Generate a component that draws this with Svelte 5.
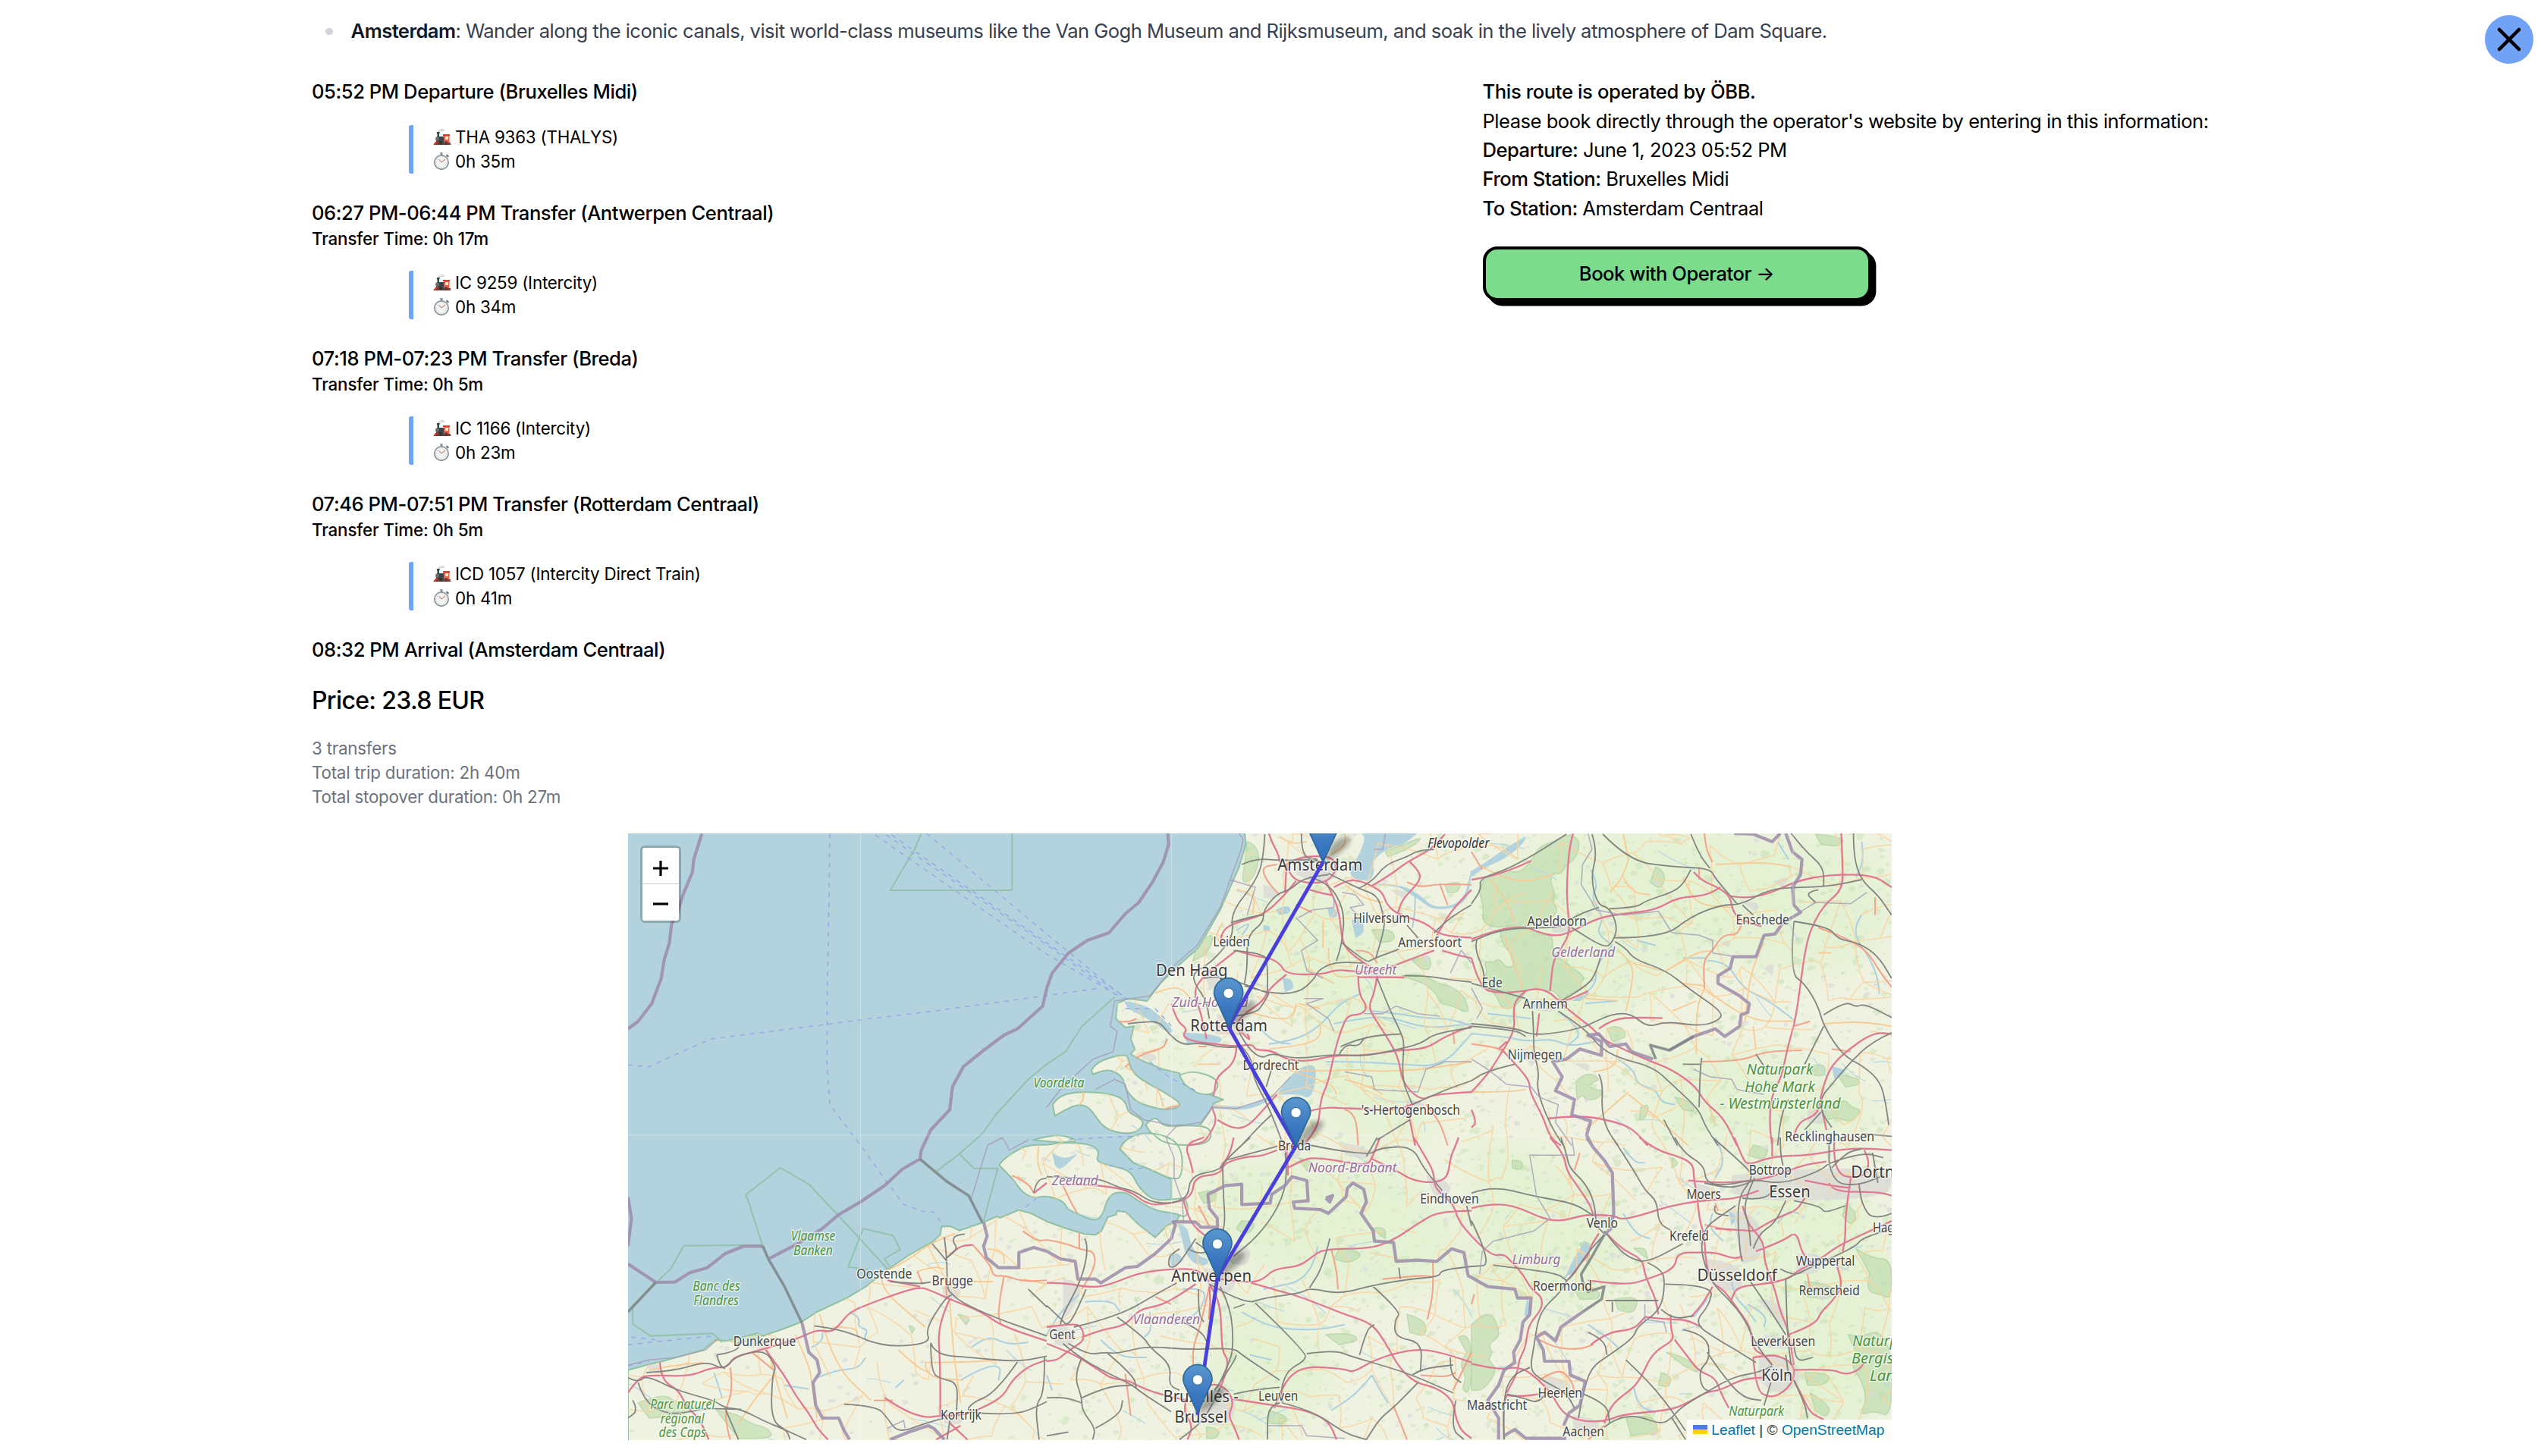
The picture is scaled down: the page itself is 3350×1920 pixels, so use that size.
<script>
  const legs = [
    { title: '05:52 PM Departure (Bruxelles Midi)', train: 'THA 9363 (THALYS)', time: '0h 35m' },
    { title: '06:27 PM-06:44 PM Transfer (Antwerpen Centraal)', wait: '0h 17m', train: 'IC 9259 (Intercity)', time: '0h 34m' },
    { title: '07:18 PM-07:23 PM Transfer (Breda)', wait: '0h 5m', train: 'IC 1166 (Intercity)', time: '0h 23m' },
    { title: '07:46 PM-07:51 PM Transfer (Rotterdam Centraal)', wait: '0h 5m', train: 'ICD 1057 (Intercity Direct Train)', time: '0h 41m' }
  ];

  // Map geometry is stored per tile: column, row, then "x,y" pairs in tile units.
  const TW = 1568, TH = 1230;
  const pts = (c, r, s) =>
    s.trim().split(/\s+/).map((p) => {
      const [x, y] = p.split(',').map(Number);
      return [(x + c * TW) / 2.8 - 8, (y + r * TH) / 3 - 9];
    });
  const f = (n) => n.toFixed(1);
  const straight = (p) => 'M' + p.map(([x, y]) => f(x) + ' ' + f(y)).join('L');
  const smooth = (p) => {
    if (p.length < 3) return straight(p);
    let d = 'M' + f(p[0][0]) + ' ' + f(p[0][1]);
    for (let i = 1; i < p.length - 1; i++) {
      const [x, y] = p[i], [nx, ny] = p[i + 1];
      d += `Q${f(x)} ${f(y)} ${f((x + nx) / 2)} ${f((y + ny) / 2)}`;
    }
    const l = p[p.length - 1];
    return d + `L${f(l[0])} ${f(l[1])}`;
  };
  const build = (tiles, fn = smooth, close = '') =>
    tiles.map(([c, r, ...lines]) => lines.map((s) => fn(pts(c, r, s)) + close).join('')).join('');

  const mainland = build([[0, 0,
    '22,2150 90,2130 150,2115 300,2070 345,2030 380,2035 430,2025 500,2005 520,2015 600,1985 665,1958 720,1920 830,1865 900,1820 970,1760 1060,1695 1150,1640 1175,1615 1180,1582 1215,1582 1245,1598 1335,1565 1385,1542 1395,1548 1465,1517 1510,1530 1568,1562 1640,1590 1708,1612 1748,1615 1770,1600 1793,1545 1823,1535 1828,1520 1860,1525 1908,1575 1968,1625 2010,1580 2048,1560 2075,1500 2068,1470 2028,1480 2028,1395 1948,1355 1888,1330 1838,1275 1850,1250 1890,1225 1960,1245 2010,1235 2000,1190 2060,1180 2128,1190 2168,1130 2185,1095 2220,1080 2168,1060 2098,1020 2058,975 1998,960 1918,925 1878,900 1893,880 1878,840 1890,790 1858,795 1823,760 1828,700 1868,680 1938,690 1988,620 2048,555 2128,480 2208,330 2278,160 2303,70 2298,20 4700,20 4700,2440 22,2440']], straight, 'Z');

  const islands = build([
    [1, 0,
      '165,965 180,930 290,898 302,920 310,960 345,1000 450,1060 505,1105 440,1122 380,1108 330,1088 290,1040 282,990 230,958 170,980',
      '22,1100 40,1070 100,1050 200,1052 260,1065 292,1090 300,1130 340,1150 360,1172 335,1210 270,1215 210,1190 180,1145 150,1105 110,1100 60,1125 30,1145',
      '365,1180 400,1140 430,1190 520,1180 610,1190 600,1260 440,1260 380,1205',
      '490,985 530,960 640,1000 620,1060 560,1060 510,1020'],
    [1, 1,
      '-175,110 -170,95 -105,45 -58,28 0,30 40,22 100,20 170,30 195,60 180,95 250,115 310,132 340,200 395,250 460,245 520,240 520,320 475,300 400,290 330,245 290,215 230,222 200,328 150,322 115,300 80,288 60,250 0,230 -48,240 -88,220 -125,165',
      '-50,10 0,-5 60,-10 120,15 60,20 0,15',
      '270,45 285,10 350,-20 440,-10 500,40 500,160 460,165 380,125 320,100']
  ], smooth, 'Z');

  const lakes = build([
    [1, 0,
      '1130,20 1180,20 1160,100 1105,200 1190,218 1212,180 1200,140 1250,90 1320,70 1375,20',
      '1200,225 1300,225 1380,270 1430,325 1540,300 1568,160 1568,190 1550,310 1430,335 1370,285 1300,240',
      '1125,370 1160,350 1175,420 1140,440', '1035,320 1070,320 1075,360 1045,360', '845,330 890,305 905,340 860,350',
      '870,600 900,595 915,640 880,655', '800,390 825,390 825,415 800,415', '500,815 640,820 650,860 520,860',
      '850,1060 900,980 960,940 1000,950 980,1080 930,1060', '600,1095 700,1115 780,1090 850,1050 830,1080 740,1125 610,1115',
      '285,690 360,700 430,760 470,810 450,820 390,770 300,720'],
    [2, 0, '0,175 40,150 100,105 180,50 205,35 190,70 120,130 40,165 0,200', '370,690 420,650 440,660 400,690', '1330,950 1400,960 1340,1000'],
    [1, 1, '485,340 520,350 530,420 560,470 600,480 590,510 540,500 510,450', '450,460 480,450 510,490 460,510', '20,60 60,90 120,60 100,80 50,130 30,110'],
    [2, 1, '420,410 350,520 360,560 440,440', '950,290 985,310 960,350', '205,640 225,660 210,720 195,700']
  ], smooth, 'Z');

  // Broad meadow tint under the woods.
  const meadow = build([
    [1, 0, '760,300 900,200 1100,300 1300,480 1500,700 1568,900 1400,1100 1200,1050 1000,800 850,600 700,500', '900,900 1100,800 1300,950 1500,1262 1100,1262 1020,1100', '350,850 600,900 560,960 420,930'],
    [2, 0, '0,300 200,27 900,27 1551,60 1551,500 1200,600 900,480 600,700 300,900 0,800', '600,900 1000,860 1400,1000 1551,1262 700,1262'],
    [1, 1, '550,150 900,60 1400,120 1568,500 1300,640 900,560 700,480 600,300', '640,600 900,680 1100,900 900,1195 560,1195'],
    [2, 1, '0,0 300,60 560,300 600,560 300,700 0,740', '980,100 1551,60 1551,1195 1150,1195 1000,700', '380,1060 700,1050 640,1195 380,1195']
  ], smooth, 'Z');

  const forest = build([
    [2, 0,
      '45,205 100,190 130,170 160,185 200,165 230,120 250,80 300,60 340,40 370,30 400,60 390,110 370,140 350,150 330,190 300,180 290,220 310,260 300,300 320,330 290,370 260,360 230,380 200,400 150,390 100,400 60,390 40,370 45,320 30,260',
      '105,410 160,400 210,405 260,430 300,430 300,500 350,540 390,570 420,600 400,620 410,640 360,660 330,690 310,650 280,650 240,640 200,650 180,690 150,720 110,720 90,660 50,640 40,600 60,580 45,530 80,540 100,520 130,560 160,550 150,510 120,470 110,440',
      '385,1010 400,990 440,975 475,1000 450,1010 430,1030 460,1040 490,1050 460,1080 420,1080 410,1060 390,1080', '625,1110 660,1090 640,1160 620,1160',
      '1290,1110 1340,1100 1380,1080 1400,1110 1440,1120 1420,1150 1400,1170 1350,1150 1310,1160', '1350,980 1420,990 1440,1020 1380,1030', '500,800 540,780 580,830 520,850',
      '750,1070 800,1080 830,1130 780,1120', '680,160 720,180 700,250 660,220', '1270,30 1380,40 1360,80 1290,70', '1250,950 1300,930 1310,990 1240,980'],
    [1, 0,
      '1310,590 1350,580 1400,590 1440,620 1490,630 1540,670 1550,700 1560,740 1500,710 1450,700 1440,660 1390,620', '1350,530 1380,520 1410,510 1420,540 1410,570 1380,560', '740,60 790,80 770,200 720,230 730,150',
      '550,480 620,400 600,500 540,530', '1470,230 1530,210 1520,260 1480,260', '1200,410 1270,400 1290,450 1230,460', '1250,100 1340,60 1390,40 1350,80 1260,120'],
    [0, 1,
      '60,1050 150,1010 200,1050 280,1060 220,1100 100,1110', '350,1080 420,1090 470,1130 540,1150 560,1190 430,1190', '380,800 430,790 500,780 520,790 430,815',
      '1240,700 1290,710 1270,740', '1060,745 1085,750 1070,775'],
    [1, 1,
      '560,220 620,200 630,250 580,260', '720,330 780,330 740,390 700,360', '1080,440 1180,450 1120,500 1060,480', '1330,700 1400,720 1400,790 1340,770',
      '1520,790 1568,760 1568,1010 1530,1000 1550,950 1525,900 1550,850', '820,1080 890,1100 880,1135 820,1130', '590,1145 640,1150 630,1190 590,1190', '640,440 730,460 690,500',
      '1030,780 1110,770 1160,800 1080,820', '1200,360 1250,350 1250,400', '930,80 1000,100 960,130'],
    [2, 1,
      '0,740 40,700 80,700 100,760 100,790 60,820 80,850 60,880 90,910 80,950 40,1000 0,1000', '700,930 740,940 730,990 690,980', '1230,930 1330,930 1310,980 1240,980', '1250,1010 1330,1060 1310,1110 1270,1080',
      '1420,440 1480,480 1551,480 1551,640 1510,620 1460,610 1470,540', '1390,780 1440,790 1500,760 1551,840 1551,1110 1490,1080 1430,1100 1460,1040 1440,960 1400,900 1420,850', '400,420 440,400 430,500', '600,440 640,430 650,480',
      '1040,30 1100,40 1080,90 1020,70', '570,1110 620,1100 680,1110 690,1180 640,1170 590,1180', '740,80 770,100 740,120', '1230,570 1340,580 1330,640 1240,630', '380,600 460,590 480,640 400,640',
      '1380,260 1430,300 1400,350 1370,310', '150,90 190,90 185,130 150,120', '720,850 800,870 850,940 780,900', '530,640 620,620 600,700 540,680']
  ], smooth, 'Z');

  const urban = build([
    [1, 0, '930,120 1060,140 1080,200 1000,230 920,190', '580,580 700,590 690,640 600,640', '630,740 760,770 740,830 620,820', '1180,560 1250,560 1240,610 1180,600', '800,230 850,240 850,290 800,280', '350,890 410,900 400,930 350,920', '1330,1080 1400,1090 1390,1130 1330,1120', '1270,250 1330,250 1320,290'],
    [2, 0, '290,380 380,380 370,420 300,420', '220,680 320,690 310,740 220,720', '180,880 260,900 220,950', '1240,1120 1300,1110 1300,1180 1240,1170', '920,460 960,440 950,480', '1110,220 1180,190 1150,240', '1080,560 1120,530 1110,590', '990,290 1070,300 1050,340', '380,940 440,930 430,970'],
    [0, 1, '100,900 140,890 140,930 100,930', '470,790 560,800 540,840 460,830', '1180,590 1250,580 1250,640 1190,640', '1190,1080 1270,1090 1250,1140 1190,1130'],
    [1, 1, '580,520 700,520 690,620 600,610', '690,420 760,430 740,510 690,500', '560,990 690,990 700,1110 620,1150 540,1100', '20,740 90,740 100,830 30,820', '60,560 140,570 100,680 60,720', '1400,150 1490,170 1490,230 1430,230', '1090,20 1200,40 1190,90 1100,70', '860,20 940,40 930,90 880,80'],
    [2, 1, '860,480 990,490 1010,600 920,610 860,560', '960,150 1120,130 1330,120 1551,130 1551,230 1300,250 1060,250 960,220', '820,180 920,200 900,260 830,240', '1060,860 1200,870 1220,980 1120,1020 1060,960', '440,290 530,300 510,370 450,350', '1200,460 1300,450 1290,540 1200,540', '1230,590 1300,590 1300,650', '270,940 370,960 360,1010 270,990', '370,1100 480,1110 460,1170 380,1160', '820,370 870,380 850,440', '1080,780 1200,790 1200,840 1090,830', '960,290 1060,290 1080,480 1000,500', '1050,640 1150,640 1160,760']
  ], smooth, 'Z');

  const motorways = build([
    [1, 0,
      '820,27 830,60 855,110 860,140', '880,260 885,150', '1030,215 1055,270 1080,340 1090,450 1110,490 1170,540 1220,570',
      '885,150 920,125 1000,115 1060,125 1070,170 1040,215 990,225 920,215 895,180 885,150',
      '1060,240 1110,210 1160,215 1200,235 1240,260 1255,310 1300,350 1400,380 1450,430 1568,440', '1200,235 1270,190 1330,140 1420,90 1470,30',
      '920,215 880,270 800,350 700,380 660,400 640,440 650,470', '700,490 640,540 580,590 540,650 570,740 590,840',
      '700,490 760,510 820,520 860,540 885,585 1020,585 1070,565 1150,575 1220,575 1330,530 1430,490', '885,585 820,640 800,690 730,740 700,780',
      '1150,590 1150,660 1185,715 1160,745 1110,745 1085,810 1060,900 1040,1010 1010,1080 1005,1180 950,1260',
      '1220,590 1210,660 1185,715 1230,790 1300,910 1310,1010 1380,1085 1430,1060 1568,1050',
      '460,700 480,770 520,800 500,830 540,850 620,860 700,870 760,860 770,885 830,885 880,920 960,930 1060,905 1180,905 1290,885 1400,880 1470,830 1568,790',
      '700,870 700,930 625,990 620,1050 605,1105 630,1160 600,1220 580,1250 520,1262', '630,1160 680,1195 740,1190 800,1120 850,1060', '960,1130 1010,1110 1130,1115 1290,1125 1380,1085',
      '740,820 760,860 700,790', '970,250 1010,262 1055,272', '1340,140 1380,180 1375,220 1310,290 1295,350', '1568,250 1500,320 1440,430', '1460,490 1520,510 1568,520', '1150,595 1220,595 1320,597', '1330,1100 1340,1160 1360,1262'],
    [2, 0,
      '375,27 360,80 350,260 360,380 360,430 320,500 300,540 290,650', '0,445 100,405 200,395 250,420 320,435 380,410 470,360 560,345 680,330 760,280 860,275 920,240',
      '820,180 850,215 910,240 955,275 965,340 1000,370', '955,275 1010,285 1100,265 1200,215 1320,190 1480,190 1551,240',
      '1365,27 1370,150 1370,250 1300,310 1250,410 1230,500 1215,620 1195,770 1165,880 1145,990 1105,1070 1100,1180 1110,1262',
      '0,520 30,640 100,660 200,650 240,640 290,655 330,700 430,650', '330,700 400,760 450,800 480,840 560,880 640,920 740,960 830,1030 860,1090 930,1150 980,1262',
      '470,800 520,760 620,755 705,758', '0,1050 60,980 90,930 160,810 155,740 160,690 200,650', '250,740 240,830', '110,880 180,960 215,1010 215,1050 265,1150 290,1230 330,1262',
      '280,1155 400,1140 540,1170 600,1200 650,1262', '1190,1230 1200,1170 1280,1140 1290,1060 1320,960 1370,900 1480,815 1551,820', '0,210 60,200 160,165 220,135', '1000,370 1070,395', '1290,1100 1310,1200', '0,1120 20,1170 0,1190', '100,880 130,850'],
    [0, 1,
      '22,1010 60,950 110,940 250,945 330,910 390,910 410,870 480,850 560,825 650,795 720,760 770,770 800,745 840,690 920,655 1010,620 1100,590 1150,610 1210,640 1330,690 1400,745 1568,805',
      '140,890 145,960 210,1000 235,1060 290,1120 320,1195', '530,840 600,940 640,1020 690,1090 720,1150 760,1195', '1195,480 1240,430 1295,425', '1210,640 1165,740 1175,900 1175,1100',
      '970,1030 1030,1075 1120,1110 1170,1100 1260,1100 1350,1060 1410,1020 1440,960 1500,905 1568,880', '1160,1195 1250,1140', '1210,1130 1275,1195', '980,565 1100,590', '1520,220 1568,180'],
    [1, 1,
      '0,575 60,575 170,595 240,580 340,535 460,520 560,520 600,570', '60,185 150,185 300,205 370,265 440,265 535,240 545,155 640,145 655,100 740,75 790,75 850,50',
      '540,140 530,90 515,50 525,20 580,0', '690,0 680,60 640,120', '505,250 520,310 550,360 600,400', '890,120 950,85 1000,80 1090,95 1180,110 1200,85 1230,0',
      '1200,85 1290,130 1350,170 1430,180 1480,160 1490,80 1510,30 1520,0', '1355,0 1400,80 1430,140 1430,200 1500,260 1520,330 1568,390',
      '1568,290 1450,290 1370,340 1290,400 1200,440 1020,440 970,480 930,510 840,520 800,560 755,575 640,560',
      '755,575 850,605 920,625 1020,665 1100,700 1200,735 1250,810 1300,910 1360,970 1440,990 1500,1040 1510,1110 1530,1160 1568,1190',
      '1568,890 1490,860 1380,835 1280,855 1200,885 1130,930 1100,915 960,905 900,940 865,1000 840,1070', '690,1035 840,1060 960,1080 1040,1120 1070,1195',
      '0,815 60,840 120,870 200,925 240,955 300,960 350,990 430,1020 520,1040', '130,790 200,760 290,745 340,680 420,665 480,630 550,580', '600,590 605,640 600,720',
      '600,580 640,640 645,790 650,850 670,880 660,940 640,990', '520,1020 560,1000 620,970 670,1000 690,1050 670,1100 690,1140 710,1195', '520,1020 500,1080 540,1140 520,1195', '0,750 100,735 130,750 140,800 100,830 60,860 40,880 0,885', '890,150 890,80 880,40'],
    [2, 1,
      '0,280 50,265 150,265 270,325 340,330 400,310 450,305 530,310 550,325 620,310 690,285 760,265 850,250 920,245 980,240 1060,210',
      '290,0 340,60 350,130 390,190 440,270 450,310', '620,0 680,50 780,80 820,110 820,160 835,240 840,320 860,390 865,500 890,580 930,600 990,690 1030,750 1040,840 1080,860 1110,900',
      '970,0 1000,80 1020,110 1110,75 1250,70 1400,40 1551,50', '1110,75 1110,0', '800,170 900,180 1000,175 1100,160 1220,110 1310,95',
      '0,390 70,470 120,460 150,495 190,540 220,600 260,630 260,680 210,740 200,830 175,880 170,930 130,1010', '360,560 400,500 430,470 440,430 470,380',
      '500,380 550,440 630,480 640,540 655,580 680,640 690,700', '430,565 500,575 590,580 650,560 750,520 760,455 850,455 900,455 970,480 1000,470',
      '640,710 720,720 790,720 850,750', '890,590 860,650 810,710', '735,700 735,760 750,800 670,850 630,940 600,990 520,1050 490,1130', '750,800 800,870 840,925 900,950 920,1010 950,1070',
      '440,820 500,770 600,760 640,710', '0,895 100,920 180,905 250,960 300,1020 330,1080 370,1110 430,1125 500,1120 560,1095 720,1080 780,1060 870,1005 920,1000 1000,955 1080,950',
      '130,1020 180,1025 250,1015', '120,1195 115,1060 130,1020', '1040,870 1050,1000 1100,1030 1150,1010 1190,960 1190,900 1150,870 1110,860 1040,870', '1190,920 1330,915 1380,940 1430,920 1450,890',
      '1190,960 1220,1020 1250,1090 1300,1115', '1000,270 1020,340 1045,370 1080,420 1080,490 1120,600 1140,690 1170,760 1190,900',
      '1551,330 1450,380 1350,430 1290,480 1200,530 1170,560 1080,580 980,590 960,640', '1170,780 1270,740 1290,690 1330,650 1370,590 1350,510',
      '1340,0 1330,150 1450,160 1470,100 1450,50', '1320,180 1330,215 1500,215 1551,230', '1400,160 1380,300 1380,400 1370,450', '1045,370 1120,320 1200,290 1230,240', '1050,450 1150,410 1200,370 1220,460 1260,500', '900,360 1045,370', '1230,170 1320,190 1400,200']
  ]);

  const rails = build([
    [1, 0,
      '805,30 800,130 770,220 680,340 690,430 640,500 590,550 540,580 545,620 590,690 600,760', '720,150 770,125 860,135 970,130 1020,140', '970,200 1040,220 1100,330 1090,460 1070,530', '940,27 940,120 1000,130',
      '1090,460 1180,540 1200,525 1300,485', '1040,190 950,200 900,250 850,265 800,330 800,380 740,430 740,560 730,620', '680,380 760,355 800,350', '690,490 800,500 815,540 815,660',
      '730,630 815,660 930,660 990,600 1000,570 1060,535 1170,540', '1040,185 1150,245 1220,270 1240,340 1250,390 1215,520', '1150,245 1200,220 1250,150 1330,120 1370,95 1430,90', '1568,310 1500,350 1430,420', '1330,390 1370,440',
      '1220,600 1260,710 1310,820 1320,860 1310,1000 1350,1100', '300,780 370,770 420,775 450,820 500,865 560,855 660,875 720,870', '700,790 730,860 790,920 830,895 920,920 1060,900 1170,910 1280,885 1380,860 1430,820 1568,795',
      '720,870 760,920 760,990 820,1110 870,1250', '1350,1100 1450,1050 1568,1005', '1340,1160 1220,1240', '1320,590 1400,590 1480,605 1568,615', '690,750 770,740 800,700 820,660', '1085,870 1170,830 1310,820', '830,960 810,1030', '1080,900 1100,860 1150,870 1170,840', '720,1260 780,1190 830,1140', '580,600 640,590 720,620 820,660'],
    [2, 0,
      '350,30 250,100 130,170 30,205 35,250 0,305', '445,30 465,100 440,200 465,310 510,320 540,400 520,460 490,480 370,400', '470,320 380,350 340,400 200,400 100,410 0,455', '485,30 580,135 740,160 880,165 900,205 980,305', '810,30 840,110 880,165',
      '510,325 610,320 640,295 740,260 780,230 810,170', '525,440 710,440 810,355 920,310 1000,308 1100,245 1240,240 1330,235 1440,210', '530,455 570,480 600,525 720,570 800,640 930,735 910,770 840,790 720,770 650,795 590,740 520,740 420,790',
      '480,500 460,590 410,640 330,690', '320,730 420,800 470,870 540,915 670,950 740,1020 840,1120 860,1180 910,1262', '225,730 230,820 230,900 250,970 240,1040 290,1180 340,1262', '0,780 160,795 220,825 330,815 420,790', '0,790 160,803 200,830', '0,620 100,650 200,680',
      '160,940 60,965 0,1005', '470,980 485,1010 480,1120 500,1200 540,1260', '1000,310 1040,350', '1190,375 1320,395 1350,445 1430,460 1500,510 1551,600', '1190,375 1175,580 1230,620 1280,710 1300,790 1370,905 1450,950 1510,1010 1530,1100 1540,1180',
      '1300,790 1230,940', '1300,745 1380,690 1420,715 1450,700 1551,755', '1410,27 1410,120 1440,215 1500,270 1551,350', '1180,27 1230,95 1300,160 1300,235', '1551,815 1480,850 1400,930 1330,1020 1290,1070 1290,1130 1330,1190', '1050,900 1100,980', '850,915 845,940 840,1110', '780,940 845,940',
      '1230,1200 1290,1130', '1440,1215 1551,1225', '1130,1262 1140,1150 1170,1080', '710,1160 760,1262', '20,450 10,480 50,580 40,640', '1280,250 1230,260 1270,300'],
    [0, 1,
      '22,950 60,970 90,940 200,1000 340,1040 380,1070 440,1075 520,1120 600,1155 680,1195', '60,970 80,1040 160,1095 260,1085 300,1072 440,1075', '380,1070 430,1195', '90,930 190,925 310,885 370,915 390,900 430,860 530,840 570,910 555,940 550,1120 610,1160 620,1195', '350,860 430,845 430,810', '350,860 360,900 380,915',
      '710,745 780,755 860,780 920,810 1010,828 1140,812 1120,760 1190,640 1220,620', '1190,395 1200,480 1200,600 1220,620 1250,650 1370,710 1568,785', '1145,420 1200,490', '1265,382 1230,385 1220,410 1240,440 1200,475', '990,570 1090,580 1140,572',
      '1140,812 1140,930 1180,955 1240,970 1235,1080', '1140,812 1155,860 1290,870 1460,888 1568,865', '1460,888 1380,1010 1290,1050 1270,1090 1460,1095 1530,1065 1568,1045', '820,1055 940,1062 980,1110 1020,1170 1120,1130 1190,1110', '1500,600 1568,670', '1560,870 1560,1010 1525,1060 1540,1195', '1210,1120 1200,1195', '40,1040 60,1080 22,1110', '1520,220 1530,170 1568,160'],
    [1, 1,
      '0,155 90,160 190,160 270,200 320,210 400,265 520,250 530,150 640,130 660,90 750,0', '660,90 850,35', '970,30 1180,75 1230,40 1350,35 1390,120 1460,210', '1180,75 1220,0', '650,100 650,200 660,340 640,400',
      '880,60 890,150 860,270 780,390 690,470', '1045,400 1020,510 970,595', '600,580 730,660 800,635 940,615 970,595 1080,620 1200,585 1340,560 1450,550 1455,525 1568,510', '1200,585 1310,690 1285,720 1285,790 1385,810 1380,920',
      '770,655 960,850 950,885 890,920 865,990 870,1050', '640,590 680,670 690,830 670,900 630,990', '690,675 730,660', '560,600 560,700 580,730', '100,750 260,710 420,610 480,575', '80,815 150,860 210,850 260,855 370,825 530,840 690,832 720,860 860,960',
      '60,815 120,870 220,930 310,975 350,1010 460,1085', '220,850 320,940 330,990', '130,870 100,940 130,1030 130,1080 180,1150 170,1195', '130,1030 220,985 320,980', '260,710 360,790 380,830 460,900 450,980 490,1000', '0,1030 60,1025 130,1050',
      '960,855 1060,840 1120,865 1250,905 1350,940 1500,1010', '1350,940 1380,915 1500,900', '1370,970 1290,1060 1230,1110 1180,1195', '690,1015 750,1000 860,988', '870,1050 980,1080 1100,1170 1180,1195', '860,1050 815,1060 815,1195', '0,665 50,715 80,750 130,640 145,600',
      '140,400 155,430 130,560 60,700 50,740', '1155,860 1180,760 1210,740', '1550,270 1568,350', '180,1150 270,1100 280,1040', '0,1180 80,1165', '550,400 520,450 480,510 450,515 450,470 490,440', '620,1000 690,890 700,860', '550,415 600,450 560,460 520,440', '1490,870 1490,940 1530,970', '1510,1040 1490,1150 1540,1195', '490,1195 560,1140 600,1080 640,990', '1300,515 1305,560', '500,730 570,760 600,830'],
    [2, 1,
      '0,220 75,190 240,235 380,260 450,310', '0,330 80,505 0,510', '80,505 200,520 320,540 350,565', '330,0 350,60 360,120 420,180 455,260 460,350 490,380', '490,370 540,440 590,480 650,495 780,420',
      '490,385 430,450 380,540 350,565 330,610 250,690 230,830 215,920 260,960 350,1010 380,1070', '520,0 600,130 640,210 685,250 690,340 740,370', '650,495 700,520 715,570 700,680 610,750 600,790 510,860 440,910 410,1020 395,1110', '495,645 690,645',
      '715,580 890,582 880,660 820,735 910,800 960,830 1050,890', '700,680 740,720 820,705', '750,0 780,60 860,110 865,180 940,190 1040,165 1150,185 1290,130 1320,100 1450,60 1520,80', '890,0 1020,120 1040,160 980,240 990,450 1000,490',
      '975,270 920,310 870,350 850,400 850,470 890,580 950,640 1010,720 1050,820 1110,900', '1045,160 1000,260 1025,350 1030,430', '1030,570 1100,680 1160,780', '1160,560 1165,780 1180,900', '1160,560 1220,530 1300,490 1420,430 1440,400 1551,360',
      '1551,300 1480,330 1440,260 1430,180', '1040,440 1060,380 1120,340 1160,250', '1320,90 1330,180 1430,190 1520,150', '1110,905 1060,930 970,945 870,1005 770,1070 740,1110 700,1135 610,1100 540,1110 490,1145', '570,880 640,950 720,1050 790,1160', '740,1110 790,1195',
      '780,760 870,780 880,880 840,920 850,990 880,1005', '870,850 920,930 1000,1030 1070,1040', '1190,960 1230,1050 1240,1110', '1105,970 1080,1060', '430,770 490,800 500,860', '120,1195 115,1030 150,940 215,910', '130,1015 190,1030 240,1050 270,1020', '400,1010 500,1050 510,1130',
      '1190,250 1290,270 1300,300 1380,270', '1170,940 1160,860', '1190,800 1190,890 1260,870', '1140,0 1140,60 1150,110', '1320,0 1320,100', '860,180 940,200 1000,190 1040,170', '900,270 890,300 950,310', '1480,60 1500,180', '1330,120 1380,60 1440,45', '1000,240 1080,250 1130,190', '1140,520 1190,550 1240,520', '520,650 520,690']
  ]);

  const trunk = build([
    [1, 0, '1568,230 1460,225 1380,240 1330,220', '860,270 820,230 790,160 850,150', '1450,225 1480,310', '260,770 300,775 330,760', '290,950 340,900 430,880 445,840', '400,1150 440,1105 530,1105 610,1105', '920,310 980,340', '1140,490 1190,490 1220,540', '560,870 590,870', '1100,1120 1140,1130 1150,1262', '1400,1100 1450,1160 1480,1262', '1500,810 1505,860'],
    [2, 0, '860,27 865,90 890,140', '1000,370 990,430 930,425 890,490 855,530 860,640', '1551,635 1510,580 1460,490 1380,440 1280,400', '850,930 990,930 1080,890 1220,885', '1330,880 1400,890', '0,100 40,170', '0,860 80,870 120,890', '1490,280 1490,350', '1190,790 1250,770', '840,210 840,160'],
    [0, 1, '1295,425 1360,500 1370,550 1410,545 1480,570 1568,565', '1410,550 1385,690 1400,740', '1480,370 1530,410 1568,405', '480,850 560,920', '400,910 410,1000 380,1080 390,1160 400,1195', '930,1040 1000,1040', '1195,580 1200,640', '1090,530 1110,580', '1440,150 1500,180 1520,220'],
    [1, 1, '0,405 60,415 130,445 175,450 180,510 130,600', '60,190 90,260 120,310 120,440', '600,590 590,640 560,770 540,830 540,900', '400,630 460,660', '1050,440 1070,520 1075,600', '1425,490 1430,600 1405,720', '1500,1000 1568,850', '560,270 600,350', '290,935 310,1100', '1240,560 1380,545 1420,550', '1380,940 1470,950 1510,930', '1330,1195 1280,1060'],
    [2, 1, '0,660 10,620', '250,800 300,830 390,840 450,820', '250,960 320,910 370,960 380,1010', '900,260 910,290', '1240,540 1250,600', '430,1195 490,1140', '860,345 960,370', '380,130 400,60']
  ]);

  const thickBorder = build([
    [0, 0, '295,27 265,130 260,180 225,270 205,340 183,385 175,460 155,530 145,600 110,700 60,770 22,800', '2015,27 2018,70 1998,140 1958,220 1908,300 1858,345 1798,420 1718,450 1648,500 1588,580 1568,640 1553,710 1460,800 1410,825 1335,885 1260,950 1220,1030 1210,1120 1140,1200 1105,1280 1100,1315 1035,1355 970,1420 880,1485 800,1535 740,1590 640,1655 545,1708'],
    [0, 1, '22,235 35,320 22,430', '22,500 125,573 195,572 250,535 315,515 380,460 450,430 520,430', '1335,335 1348,390 1335,430 1345,475 1390,515 1465,515 1465,455 1520,435 1568,450', '665,735 690,850 720,880 730,930 705,970 715,1060 740,1110 800,1110 820,1160 840,1195', '990,1195 1060,1165 1130,1140 1150,1150 1190,1195'],
    [1, 1, '0,450 50,480 105,490 115,560 180,560 200,575 290,515 335,510 400,460 460,400 475,345 465,333 550,335 570,355 630,355 630,320 600,280 595,225 660,190 720,185 720,265 825,260 830,225 880,190 905,155 960,170 965,250 910,255 915,280 1010,285 1040,300 1105,235 1110,200 1130,180 1170,205 1180,255 1160,300 1205,370 1210,410 1280,415 1290,490 1370,485 1440,490 1495,440 1540,455 1555,545', '1030,240 1055,230 1045,255 1030,240'],
    [2, 1, '-15,545 60,590 160,600 170,635 220,635 215,700 190,730 180,800 155,850 160,890 120,920 100,980 60,1040 100,1110 100,1195', '425,0 450,40 490,90 520,140 525,300 515,360 490,385', '410,690 330,750 310,805 270,770 240,790 265,840 270,885 360,885 365,940 420,965 400,1060 360,1090 340,1140', '120,1180 160,1155 200,1190 350,1190'],
    [2, 0, '970,27 1040,30 1110,60 1140,27', '1160,27 1185,100 1220,130 1215,190 1185,240 1190,310 1215,340 1150,380 1120,425 1080,430 1050,515 965,515 955,560 910,590 910,620 990,670 1025,700 1020,735 995,745 990,790 935,830 900,800 820,830 730,885', '670,920 590,890 570,860 510,870 470,820 430,825 480,850 480,905 400,880 350,920 300,930 335,990 310,1045 380,1080 370,1140 440,1165 425,1220 445,1262']
  ], straight);

  const darkBorder = build([
    [0, 1, '520,430 540,480 600,590 665,735', '22,690 125,573', '1100,85 1200,175 1280,230 1330,335'],
    [2, 0, '820,830 730,885 660,865 680,920'],
    [2, 1, '490,385 440,480 405,540 410,570 430,610 490,590 480,640 410,690']
  ], straight);

  const provinces = build([
    [1, 0, '710,27 725,50 715,100 680,200 640,320 555,470 480,540 380,670 250,690 235,790 260,810 245,890 170,920 110,980 50,1040 0,1110', '675,210 770,240 740,350', '1250,27 1240,90 1210,90', '1090,260 1140,270 1170,310 1120,320 1150,350', '930,360 980,330 1060,320 1060,280', '920,360 1000,450 940,490 960,570 1020,600', '950,680 1020,680 960,700 1040,760 1060,810', '1170,740 1240,740 1290,710 1370,740 1450,750', '1100,970 1200,990 1210,1040 1370,1050 1400,960 1470,930 1568,930', '180,1040 250,1000 290,1020 310,1120 360,1160 480,1185 570,1170 610,1110 700,1115 830,1070 900,990', '480,1185 440,1230', '1568,540 1530,490 1490,580'],
    [2, 0, '430,27 445,90 410,150 405,230 440,290 460,330 560,350 690,335 740,420 840,430 890,450 890,500 960,512', '0,640 40,720 20,760', '0,920 60,960 130,1020 220,1030 250,1070 320,1100 310,1170 370,1262', '1210,340 1270,300 1400,305 1460,260', '820,960 880,990 960,1000 980,1040 1080,1060'],
    [2, 1, '370,0 380,70 215,70 240,230 290,320 230,370 80,410 40,450 30,540', '640,660 640,720 710,730 720,770'],
    [0, 1, '1290,240 1350,30 1405,0 1430,50 1500,10', '22,900 100,880 200,870 310,840 350,800', '980,1150 1040,1120 1045,1150'],
    [1, 1, '440,0 470,80 470,160 500,250 505,330', '815,1140 940,1140 960,1180 1100,1190']
  ], straight);

  const reserves = build([
    [0, 0, '1105,27 1080,90 990,252 1440,252 1440,27', '1818,675 1698,790 1638,890 1568,940 1500,1000 1380,1140 1330,1215 1245,1295 1160,1365', '1245,1295 1300,1352 1387,1352 1335,1560'],
    [0, 1, '520,430 458,225 585,120 690,185 800,310 980,520', '520,425 228,428 180,520 125,575 40,665 40,738 105,785 335,775 370,810', '910,522 835,512 890,360 1000,388 1028,443 968,480 988,510']
  ], straight);

  const ferries = build([
    [0, 0, '767,27 765,240 757,700 757,950 767,1100 880,1260 960,1380 1040,1495 1110,1522 1150,1525 1190,1585', '22,943 100,950 180,910 330,840 757,782 900,762 1150,730 1568,668 1760,640', '935,33 1568,505 1850,680', '975,33 1568,468 1830,670', '995,33 1568,460 1850,670', '1125,27 1568,425 1870,690'],
    [0, 1, '22,820 150,805 340,785', '35,790 140,802', '22,903 100,885', '1490,275 1530,240'],
    [1, 0, '290,720 400,720 470,800', '380,930 450,990 560,1050', '80,1240 200,1230 340,1225'],
    [1, 1, '230,110 300,125 370,120']
  ], straight);

  const rivers = build([
    [1, 0, '820,860 900,850 1000,800 1080,700 1160,660', '1060,780 1150,760 1260,750 1400,800 1568,780', '1030,930 1150,930 1300,940 1460,950 1568,820', '1568,790 1500,760 1400,760 1300,740 1200,730', '1360,270 1360,330 1350,400', '700,410 760,370 720,430', '790,800 830,850 900,860'],
    [2, 0, '0,820 120,830 200,850 300,840 360,870 460,850', '440,170 470,230 440,280 490,360 460,420 520,470', '520,470 460,540 460,620 420,660', '540,920 600,960 610,1020 680,1040 700,1090 750,1100', '610,450 680,470', '870,530 940,530 1000,640 1100,690 1190,765', '780,520 870,520', '1440,350 1400,410 1470,520 1500,600 1505,660', '1130,60 1170,130', '1440,60 1450,130 1420,200', '330,740 420,810 350,870', '60,740 150,750 220,760', '420,700 540,690'],
    [2, 1, '560,40 600,100 640,100', '900,0 940,80 900,160', '890,300 870,350 930,410', '960,570 970,630 1010,670 1050,730', '820,710 870,640', '400,480 340,560', '600,990 610,1060 680,1090', '430,740 500,790 540,830', '1020,660 1090,700 1080,750', '560,300 600,380 660,400', '1130,340 1160,290 1210,300'],
    [0, 1, '340,930 370,1030', '720,950 790,920 870,915 900,870', '840,690 880,710 870,750 910,760 890,800 930,810', '600,980 690,995', '1290,830 1350,780 1420,820 1500,810', '1250,960 1330,910 1400,900 1390,960', '1010,990 1040,960', '700,830 740,810 740,770'],
    [1, 1, '0,780 40,700 120,620', '200,800 260,870 370,870', '140,650 240,640 270,690', '380,690 390,760 360,790', '720,690 800,740 900,760 1010,760 1100,740', '750,860 830,880', '1200,940 1150,1010 1050,1080', '1200,940 1230,1000 1260,1050', '500,600 600,590 560,700 470,740', '1000,430 980,560 800,600', '0,940 20,1000']
  ]);

  const secondary = build([
    [1, 0, '1100,30 1110,70 1050,110', '860,40 900,70 960,60', '700,250 770,260 760,350', '1240,300 1180,290 1100,230', '1020,370 1020,480', '650,380 620,430 640,460', '1040,480 1040,600 1150,590', '960,560 1060,620', '400,660 480,620 540,690', '930,700 1010,720', '920,700 920,780 730,730', '820,880 920,870 1010,840 1010,780', '1180,710 1250,790', '560,940 640,940', '430,1110 420,1050 380,1010 290,950', '60,1180 130,1100 140,1040', '820,940 1050,1010 1070,1060', '900,960 1000,970 1150,960 1220,970 1400,960 1568,930', '1100,1000 1200,1030 1240,1060'],
    [0, 1, '1230,380 1150,410 1050,490 950,540 700,690', '960,560 955,600 1120,750', '530,810 580,1000 610,1110', '640,780 690,900 700,960 720,1110', '730,700 780,900 920,1040', '780,750 860,750 870,780', '1090,530 1150,510 1190,520', '1120,890 1120,950 1260,960', '1120,890 1250,890 1400,880', '1210,650 1220,800 1230,900 1250,1050', '1350,440 1410,450 1410,500', '1020,840 1080,900 1130,930', '1240,570 1370,570', '570,930 500,1020 430,1130', '300,890 200,900 100,920', '1480,560 1568,580', '1540,20 1530,90 1550,150', '1460,150 1490,180'],
    [2, 0, '580,130 560,200 510,260', '560,200 590,260 660,270', '560,30 580,130', '900,150 1050,140 1140,150 1180,160', '780,200 800,250 840,310 960,320', '540,490 600,540 590,640 570,730', '600,540 700,570', '720,570 820,500 890,490', '860,640 830,700 830,900', '860,640 1010,770 1190,770', '780,620 860,630', '830,690 740,730', '1080,460 1030,560 1010,770', '1040,790 1050,880', '1280,500 1330,500', '420,680 540,690', '120,430 160,560 190,640', '70,210 130,290 160,380', '0,1050 130,1050 200,1040', '450,970 530,960 540,880', '420,1200 580,1050', '580,1060 640,1110 800,1262', '870,1080 900,1180', '1551,790 1450,770 1300,780', '40,160 160,230 300,190']
  ]);

  // Minor roads: a jittered lattice, deterministic so every render is identical.
  let seed = 71;
  const rnd = () => ((seed = (seed * 16807) % 2147483647) / 2147483647);
  const gw = 38, gx = 46, gy = 23;
  const nodes = Array.from({ length: gy }, (_, j) =>
    Array.from({ length: gx }, (_, i) => [i * gw - 10 + (rnd() - 0.5) * 34, j * gw - 10 + (rnd() - 0.5) * 34]));
  let minor = '', brooks = '', specks = '', copses = '', towns = '';
  const curve = ([a, b], [c, d]) =>
    `M${f(a)} ${f(b)}Q${f((a + c) / 2 + (rnd() - 0.5) * 14)} ${f((b + d) / 2 + (rnd() - 0.5) * 14)} ${f(c)} ${f(d)}`;
  for (let j = 0; j < gy - 1; j++)
    for (let i = 0; i < gx - 1; i++) {
      if (rnd() < 0.5) minor += curve(nodes[j][i], nodes[j][i + 1]);
      if (rnd() < 0.5) minor += curve(nodes[j][i], nodes[j + 1][i]);
      if (rnd() < 0.1) minor += curve(nodes[j][i], nodes[j + 1][i + 1]);
      if (rnd() < 0.13) brooks += curve([nodes[j][i][0] + 17, nodes[j][i][1] + 12], [nodes[j + 1][i + 1][0] + 9, nodes[j + 1][i + 1][1] - 14]);
    }
  const blob = (x, y, r) => `M${f(x - r)} ${f(y)}l${f(r * 0.7)} ${f(-r * rnd())}l${f(r)} ${f(r * 0.3)}l${f(-r * 0.2)} ${f(r * rnd())}l${f(-r)} ${f(r * 0.4)}z`;
  for (let n = 0; n < 4200; n++) specks += blob(500 + rnd() * 1166, rnd() * 800, 1 + rnd() * rnd() * 6);
  for (let n = 0; n < 900; n++) copses += blob(660 + rnd() * 1006, rnd() * 800, 2 + rnd() * rnd() * 8);
  for (let n = 0; n < 700; n++) towns += blob(rnd() * 1666, rnd() * 800, 2 + rnd() * 3.5);

  const graticule = build([[0, 0, '881,27 881,2430', '2028,27 2028,2430', '4323,27 4323,2430', '22,1221 4690,1221']], straight);

  // Label: column, row, text, left, right, baseline, kind
  const labels = [
    [1, 0, 'Amsterdam', 852, 1166, 175, 'city'], [1, 0, 'Den Haag', 403, 668, 592, 'city'], [1, 0, 'Rotterdam', 530, 815, 811, 'city'],
    [1, 0, 'Leiden', 614, 750, 473, 'town'], [1, 0, 'Hilversum', 1132, 1341, 380, 'town'], [1, 0, 'Amersfoort', 1297, 1532, 476, 'town'],
    [1, 0, 'Dordrecht', 724, 931, 962, 'town'], [1, 0, "'s-Hertogenbosch", 1161, 1526, 1139, 'town'], [1, 0, 'Flevopolder', 1406, 1634, 84, 'polder'],
    [1, 0, 'Utrecht', 1137, 1291, 586, 'prov'], [1, 0, 'Zuid-Holland', 463, 744, 714, 'prov'], [0, 0, 'Voordelta', 1519, 1706, 1032, 'park'],
    [2, 0, 'Apeldoorn', 206, 425, 393, 'town'], [2, 0, 'Enschede', 976, 1173, 386, 'town'], [2, 0, 'Ede', 38, 114, 635, 'town'], [2, 0, 'Arnhem', 190, 355, 720, 'town'],
    [2, 0, 'Nijmegen', 134, 335, 920, 'town'], [2, 0, 'Gelderland', 295, 530, 515, 'prov'], [2, 0, 'Naturpark', 1015, 1261, 980, 'bigpark'], [2, 0, 'Hohe Mark', 1009, 1268, 1049, 'bigpark'],
    [2, 0, '- Westmünsterland', 917, 1362, 1117, 'bigpark'], [2, 0, 'Recklinghausen', 1157, 1487, 1244, 'town'],
    [0, 1, 'Vlaamse', 624, 788, 409, 'park'], [0, 1, 'Banken', 633, 778, 466, 'park'], [0, 1, 'Banc des', 261, 436, 607, 'park'], [0, 1, 'Flandres', 264, 431, 664, 'park'],
    [0, 1, 'Oostende', 866, 1071, 559, 'town'], [0, 1, 'Brugge', 1144, 1296, 584, 'town'], [0, 1, 'Dunkerque', 411, 642, 825, 'town'], [0, 1, 'Kortrijk', 1176, 1327, 1116, 'town'],
    [0, 1, 'Parc naturel', 104, 343, 1073, 'park'], [0, 1, 'régional', 142, 304, 1130, 'park'], [0, 1, 'des Caps', 136, 310, 1186, 'park'],
    [1, 1, 'Breda', 854, 975, 51, 'town'], [1, 1, 'Zeeland', 19, 190, 188, 'prov'], [1, 1, 'Noord-Brabant', 965, 1292, 139, 'prov'], [1, 1, 'Eindhoven', 1378, 1595, 261, 'town'],
    [1, 1, 'Antwerpen', 460, 756, 571, 'city'], [1, 1, 'Vlaanderen', 318, 566, 738, 'prov'], [1, 1, 'Gent', 9, 106, 797, 'town'], [1, 1, 'Leuven', 781, 928, 1040, 'town'],
    [1, 1, 'Bruxelles -', 430, 708, 1046, 'city'], [1, 1, 'Brussel', 472, 667, 1128, 'city'], [1, 1, 'Maastricht', 1551, 1773, 1077, 'town'],
    [2, 1, 'Venlo', 425, 540, 357, 'town'], [2, 1, 'Moers', 794, 921, 243, 'town'], [2, 1, 'Bottrop', 1024, 1181, 147, 'town'], [2, 1, 'Essen', 1098, 1251, 237, 'city'],
    [2, 1, 'Dortmund', 1401, 1690, 158, 'city'], [2, 1, 'Hagen', 1481, 1610, 375, 'town'], [2, 1, 'Krefeld', 731, 876, 408, 'town'], [2, 1, 'Wuppertal', 1198, 1415, 506, 'town'],
    [2, 1, 'Düsseldorf', 833, 1128, 566, 'city'], [2, 1, 'Remscheid', 1208, 1433, 623, 'town'], [2, 1, 'Limburg', 150, 329, 502, 'prov'], [2, 1, 'Roermond', 227, 445, 605, 'town'],
    [2, 1, 'Leverkusen', 1031, 1269, 826, 'town'], [2, 1, 'Köln', 1070, 1185, 962, 'city'], [2, 1, 'Heerlen', 245, 409, 1028, 'town'], [2, 1, 'Aachen', 337, 490, 1181, 'town'],
    [2, 1, 'Naturpark', 950, 1154, 1102, 'park'], [2, 1, 'Naturpark', 1406, 1652, 824, 'bigpark'], [2, 1, 'Bergisches', 1403, 1668, 893, 'bigpark'], [2, 1, 'Land', 1470, 1595, 962, 'bigpark']
  ].map(([c, r, text, a, b, y, kind]) => ({ text, kind, x: (a + c * TW) / 2.8 - 8, y: (y + r * TH) / 3 - 9, len: (b - a) / 2.8 }));

  const stops = pts(1, 0, '1020,141 671,792 920,1264 630,1784 557,2321');
  const route = straight(stops);
</script>

{#snippet loco()}
  <svg class="emoji" viewBox="0 0 23 23">
    <path d="M7 5C6 3 8 1 10 2c1-2 4-1 4 0 2-1 2 2 0 2-2 0-3 1-5 1z" fill="#dcdcdc" />
    <path d="M13 8h9v2h-9z" fill="#d2402c" /><path d="M14 10h7.500v9H14z" fill="#e8604a" /><path d="M16 11h4v4h-4z" fill="#f6e3c8" />
    <path d="M4.500 5h4.500l-1 3v3h6v8H4v-7l1.500-1V8z" fill="#3f4442" /><circle cx="5.500" cy="14" r="2.500" fill="#6a6f6b" />
    <path d="M0 22l4-5h3v5z" fill="#b5382a" /><path d="M5 19h18v3H4z" fill="#7b3b33" /><circle cx="10" cy="19.500" r="2.200" fill="#2f3432" /><circle cx="17" cy="19.500" r="2.200" fill="#5a3b36" />
  </svg>
{/snippet}

{#snippet watch()}
  <svg class="emoji" viewBox="0 0 23 23">
    <path d="M9.500 0h3v4h-3z" fill="#858d95" /><path d="M18 2.500l3 2.600-1.500 1.300-2.500-2.400z" fill="#59616b" />
    <circle cx="11" cy="13" r="9.200" fill="#f3f3f2" stroke="#8a9299" stroke-width="1.700" />
    <circle cx="11" cy="13" r="6.900" fill="none" stroke="#b9bdc0" stroke-width="1.200" stroke-dasharray=".8 2.800" />
    <path d="M11 13l5-4" stroke="#e2574c" stroke-width="1" /><path d="M11 13L7.500 9" stroke="#777" stroke-width=".9" />
  </svg>
{/snippet}

<main class="page">
  <button class="close" aria-label="Close">
    <svg viewBox="0 0 32 32"><path d="M3 3L29 29M29 3L3 29" /></svg>
  </button>

  <ul class="cities">
    <li><span><strong>Amsterdam</strong>: Wander along the iconic canals, visit world-class museums like the Van Gogh Museum and Rijksmuseum, and soak in the lively atmosphere of Dam Square.</span></li>
  </ul>

  <div class="columns">
    <section class="trip">
      {#each legs as leg}
        <h3>{leg.title}</h3>
        {#if leg.wait}<p class="wait">Transfer Time: {leg.wait}</p>{/if}
        <div class="leg">
          <p>{@render loco()}<span>{leg.train}</span></p>
          <p>{@render watch()}<span>{leg.time}</span></p>
        </div>
      {/each}
      <h3>08:32 PM Arrival (Amsterdam Centraal)</h3>
      <p class="price">Price: 23.8 EUR</p>
      <div class="totals">
        <p>3 transfers</p>
        <p>Total trip duration: 2h 40m</p>
        <p>Total stopover duration: 0h 27m</p>
      </div>
    </section>

    <section class="booking">
      <p class="operator"><b>This route is operated by ÖBB.</b></p>
      <p>Please book directly through the operator's website by entering in this information:</p>
      <p><b>Departure:</b> June 1, 2023 05:52 PM</p>
      <p><b>From Station:</b> Bruxelles Midi</p>
      <p><b>To Station:</b> Amsterdam Centraal</p>
      <button class="book">Book with Operator →</button>
    </section>
  </div>

  <div class="map">
    <svg class="canvas" viewBox="0 0 1666 800">
      <defs>
        <clipPath id="land"><path d={mainland} /><path d={islands} /></clipPath>
        <linearGradient id="pin" x1="0" y1="0" x2="0" y2="1"><stop offset="0" stop-color="#5a97cf" /><stop offset=".6" stop-color="#3c78c0" /><stop offset="1" stop-color="#2e6bbb" /></linearGradient>
        <filter id="soft" x="-50%" y="-50%" width="200%" height="200%"><feGaussianBlur stdDeviation="3" /></filter>
        <filter id="wash" x="-10%" y="-10%" width="120%" height="120%"><feGaussianBlur stdDeviation="18" /></filter>
      </defs>
      <rect width="1666" height="800" fill="#b2d2dd" />
      <path d={mainland} class="land" /><path d={islands} class="land" />
      <g clip-path="url(#land)">
        <path d={meadow} class="meadow" filter="url(#wash)" />
        <path d={specks} class="specks" /><path d={copses} class="copses" /><path d={forest} class="forest" /><path d={urban} class="urban" /><path d={towns} class="towns" />
        <path d={lakes} class="lakes" /><path d={rivers} class="river" /><path d={brooks} class="brook" />
        <path d={minor} class="minor" /><path d={secondary} class="second" />
        <path d={trunk} class="trunk" /><path d={motorways} class="motorway" /><path d={rails} class="rail" />
      </g>
      <path d={reserves} class="reserve" /><path d={ferries} class="ferry" /><path d={provinces} class="province" />
      <path d={thickBorder} class="border" /><path d={darkBorder} class="border dark" /><path d={graticule} class="grid" />
      {#each labels as l}
        <text class={l.kind} x={l.x} y={l.y} textLength={l.len} lengthAdjust="spacingAndGlyphs">{l.text}</text>
      {/each}
      {#each stops as [x, y]}
        <path d="M0 0L10 -22C20 -34 40 -38 36 -28C32 -18 16 -6 0 0z" transform="translate({x} {y})" fill="#000" opacity=".3" filter="url(#soft)" />
      {/each}
      <path d={route} class="route" />
      {#each stops as [x, y]}
        <g transform="translate({x - 20} {y - 65}) scale(1.6)">
          <path d="M12.500 .6C5.900.6.6 6 .6 12.600c0 2.300 1.500 5.600 2.600 7.600L12.500 40.600l9.300-20.400c1.100-2 2.600-5.300 2.600-7.600C24.400 6 19.100.6 12.500.6z" fill="url(#pin)" stroke="#2e6c97" stroke-width="1.100" />
          <circle cx="12.500" cy="13" r="4.200" fill="#fff" stroke="#2e6c97" stroke-width=".6" />
        </g>
      {/each}
    </svg>
    <div class="zoom">
      <button aria-label="Zoom in"><svg viewBox="0 0 20 20"><path d="M10 0v20M0 10h20" /></svg></button>
      <button aria-label="Zoom out"><svg viewBox="0 0 20 20"><path d="M0 10h20" /></svg></button>
    </div>
    <div class="credit">
      <svg viewBox="0 0 19 12"><path fill="#4c7be1" d="M0 0h19v6H0z" /><path fill="#ffd500" d="M0 6h19v6H0z" /></svg>
      <a href="#leaflet">Leaflet</a><span>|</span><span>©</span><a href="#osm">OpenStreetMap</a>
    </div>
  </div>
</main>

<style>
  :global(body) { background: #fff; }
  .page {
    width: 3350px; height: 1920px; overflow: hidden; position: relative; box-sizing: border-box;
    padding: 22.400px 409px 0 411px; font-family: Inter, sans-serif; font-size: 25.600px; line-height: 38.400px; color: #000;
  }
  p, h3, ul { margin: 0; padding: 0; }
  button { font: inherit; color: inherit; padding: 0; border: 0; cursor: pointer; }
  .close { position: absolute; right: 10px; top: 20px; width: 64px; height: 64px; border-radius: 50%; background: #70a3f5; display: grid; place-items: center; }
  .close svg { width: 32px; height: 32px; }
  .close path { stroke: #000; stroke-width: 4.500; stroke-linecap: round; }
  .cities { list-style: none; color: #374151; letter-spacing: -.564px; }
  .cities li { display: flex; align-items: center; gap: 24px; padding-left: 18px; white-space: nowrap; }
  .cities li::before { content: ''; width: 9.600px; height: 9.600px; border-radius: 50%; background: #d1d5db; }
  .cities strong { color: #111827; font-weight: 600; }
  .columns { display: grid; grid-template-columns: 1543.500px 1fr; margin-top: 40px; height: 998px; }
  h3 { padding-top: 2.400px; font-size: 25.600px; font-weight: 500; line-height: 36px; letter-spacing: -.445px; }
  .wait { font-size: 22.400px; line-height: 32px; font-weight: 500; letter-spacing: -.172px; }
  .leg { margin: 25.600px 0 32px 128px; border-left: 6.400px solid #70a3f5; border-radius: 3px; padding-left: 26px; font-size: 22.400px; line-height: 32px; letter-spacing: -.23px; }
  .leg p { display: flex; align-items: center; gap: 6px; }
  .emoji { width: 23px; height: 23px; }
  .price { margin: 25.600px 0; padding-top: 2px; font-size: 32px; line-height: 42.800px; font-weight: 500; letter-spacing: -.66px; }
  .totals { font-size: 22.400px; line-height: 32px; color: #6b7280; letter-spacing: -.235px; }
  .booking { white-space: nowrap; letter-spacing: -.502px; }
  .booking p { padding-top: 2.400px; line-height: 36px; }
  .booking b { font-weight: 500; }
  .booking .operator { letter-spacing: -.382px; }
  .book { margin-top: 32px; width: 512px; height: 72px; box-sizing: border-box; display: block; border: 4px solid #000; border-radius: 19px; background: #7bdd8c; box-shadow: 6.400px 6.400px 0 #000; font-weight: 500; letter-spacing: -.502px; }
  .map { position: relative; width: 1666px; height: 800px; margin: 0 auto 0 417px; overflow: hidden; }
  .canvas { display: block; width: 1666px; height: 800px; }
  .canvas path { stroke-linejoin: round; }
  .land { fill: #eff2e0; stroke: #8fc0a4; stroke-width: 2; }
  .meadow { fill: #e4f1d3; }
  .specks { fill: #cfe6be; opacity: .6; }
  .copses { fill: #c3dfb2; opacity: .5; }
  .forest { fill: #bfdcae; opacity: .65; stroke: #a5cc97; stroke-width: 1.500; }
  .urban { fill: #d9d8d6; opacity: .75; }
  .towns { fill: #dcdadb; opacity: .7; }
  .lakes { fill: #b2d2dd; }
  .river, .brook, .minor, .second, .trunk, .motorway, .rail, .reserve, .ferry, .province, .border, .grid, .route { fill: none; }
  .river { stroke: #abd0df; stroke-width: 2; }
  .brook { stroke: #b7d8e2; stroke-width: 1.200; }
  .minor { stroke: #f9d3a0; stroke-width: 1.500; opacity: .85; }
  .second { stroke: #f8cb95; stroke-width: 1.800; }
  .trunk { stroke: #f2a58a; stroke-width: 2.100; }
  .motorway { stroke: #df7a92; stroke-width: 2.300; }
  .rail { stroke: #848582; stroke-width: 1.800; }
  .reserve { stroke: #93c2ae; stroke-width: 2; }
  .ferry { stroke: #94aae6; stroke-width: 1.500; stroke-dasharray: 6 7; }
  .province { stroke: #a59bb8; stroke-width: 1.500; opacity: .8; }
  .border { stroke: #9c8cab; stroke-width: 4.200; opacity: .85; }
  .dark { stroke: #7c8587; stroke-width: 3.500; }
  .grid { stroke: #fff; stroke-width: 1; opacity: .35; }
  .route { stroke: #4a3fdc; stroke-width: 4.800; stroke-linecap: round; }
  text { font-family: 'Noto Sans', sans-serif; paint-order: stroke; stroke: rgb(255 255 255 / .65); stroke-width: 3px; stroke-linejoin: round; }
  .city { font-size: 21.500px; fill: #3b3b3b; }
  .town { font-size: 17.500px; fill: #454545; }
  .polder { font-size: 17.500px; font-style: italic; fill: #333; }
  .prov { font-size: 18px; font-style: italic; fill: #94709b; }
  .park { font-size: 18px; font-style: italic; fill: #4c9440; }
  .bigpark { font-size: 20.500px; font-style: italic; fill: #4c9440; }
  .zoom { position: absolute; left: 16px; top: 16px; width: 48px; border: 3.200px solid rgb(0 0 0 / .2); border-radius: 6.400px; background-clip: padding-box; }
  .zoom button { display: grid; place-items: center; width: 48px; height: 48px; padding-top: 5px; box-sizing: border-box; background: #fff; border-radius: 0 0 3px 3px; }
  .zoom button:first-child { border-bottom: 1.600px solid #ccc; border-radius: 3px 3px 0 0; padding-top: 7px; }
  .zoom svg { width: 20px; height: 20px; }
  .zoom path { stroke: #000; stroke-width: 3.200; }
  .credit { position: absolute; right: 0; bottom: 0; width: 270px; height: 27px; box-sizing: border-box; padding: 0 8px; display: flex; align-items: center; gap: 5.300px; background: rgb(255 255 255 / .8); color: #333; font: 19.200px/27px 'Liberation Sans', sans-serif; white-space: nowrap; }
  .credit svg { width: 19px; height: 12px; }
  .credit a { color: #0078a8; text-decoration: none; }
</style>
